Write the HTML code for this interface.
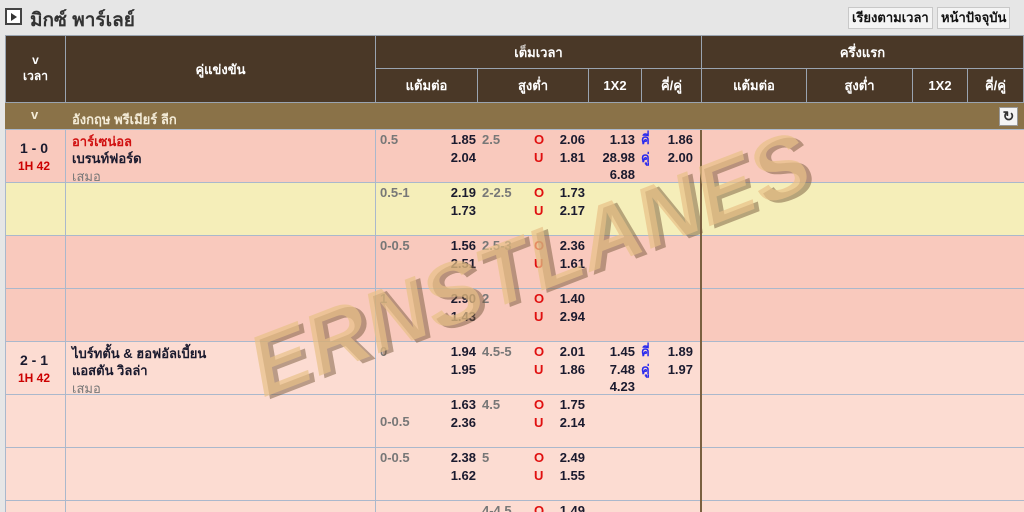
<!DOCTYPE html>
<html><head><meta charset="utf-8"><style>
*{margin:0;padding:0;box-sizing:border-box}
html,body{width:1024px;height:512px;overflow:hidden}
body{background:#e6e6e6;font-family:"Liberation Sans","Noto Sans CJK SC",sans-serif;position:relative;font-size:13px}
.a{position:absolute;white-space:nowrap}
.h{background:#4a3827;color:#fff;border:1px solid #9aa4b0;display:flex;align-items:center;justify-content:center;font-size:13px;font-weight:bold}
.row{position:absolute;left:5px;width:1019px;height:53px;border-bottom:1px solid #aab8cc}
.b{font-weight:bold;color:#1a1a2e}
.g{color:#777;font-weight:bold}
.r{color:#e01010;font-weight:bold}
.bl{color:#2a2aee;font-weight:bold}
.btn{position:absolute;top:7px;height:22px;background:#f4f4f4;border:1px solid #c8c8c8;font-size:13px;line-height:20px;padding:0 3px;color:#111;font-weight:bold;white-space:nowrap}
</style></head><body>
<div class="a" style="left:5px;top:8px;width:17px;height:17px;border:2px solid #444;background:#fff"><div style="position:absolute;left:4px;top:3px;border-left:6px solid #333;border-top:4px solid transparent;border-bottom:4px solid transparent"></div></div>
<div class="a" style="left:30px;top:5px;font-size:19px;font-weight:bold;color:#333">มิกซ์ พาร์เลย์</div>
<div class="btn" style="left:848px">เรียงตามเวลา</div>
<div class="btn" style="left:937px">หน้าปัจจุบัน</div>

<div class="a h" style="left:5px;top:35px;width:61px;height:68px;flex-direction:column;font-size:12px"><div>v</div><div>เวลา</div></div>
<div class="a h" style="left:65px;top:35px;width:311px;height:68px">คู่แข่งขัน</div>
<div class="a h" style="left:375px;top:35px;width:327px;height:34px">เต็มเวลา</div>
<div class="a h" style="left:701px;top:35px;width:323px;height:34px">ครึ่งแรก</div>
<div class="a h" style="left:375px;top:68px;width:103px;height:35px">แต้มต่อ</div>
<div class="a h" style="left:477px;top:68px;width:112px;height:35px">สูงต่ำ</div>
<div class="a h" style="left:588px;top:68px;width:54px;height:35px">1X2</div>
<div class="a h" style="left:641px;top:68px;width:61px;height:35px">คี่/คู่</div>
<div class="a h" style="left:701px;top:68px;width:106px;height:35px">แต้มต่อ</div>
<div class="a h" style="left:806px;top:68px;width:107px;height:35px">สูงต่ำ</div>
<div class="a h" style="left:912px;top:68px;width:56px;height:35px">1X2</div>
<div class="a h" style="left:967px;top:68px;width:57px;height:35px">คี่/คู่</div>

<div class="a" style="left:5px;top:103px;width:1019px;height:27px;background:#8a7248;color:#f4ecd8;font-weight:bold;border-bottom:1px solid #aab8cc">
<span class="a" style="left:26px;top:4px">v</span><span class="a" style="left:67px;top:6px">อังกฤษ พรีเมียร์ ลีก</span>
<span class="a" style="left:994px;top:4px;width:19px;height:19px;background:#f4f4f4;border:1px solid #999;color:#333;text-align:center;line-height:17px;font-size:14px">↻</span></div>

<div class="row" style="top:130px;background:#f9c9bd"></div>
<div class="row" style="top:183px;background:#f5eeb9"></div>
<div class="row" style="top:236px;background:#f9c9bd"></div>
<div class="row" style="top:289px;background:#f9c9bd"></div>
<div class="row" style="top:342px;background:#fcdcd2"></div>
<div class="row" style="top:395px;background:#fcdcd2"></div>
<div class="row" style="top:448px;background:#fcdcd2"></div>
<div class="row" style="top:501px;height:11px;border:0;background:#fcdcd2"></div>
<div class="a" style="left:5px;top:130px;width:1px;height:382px;background:#aab8cc"></div>
<div class="a" style="left:65px;top:130px;width:1px;height:382px;background:#aab8cc"></div>
<div class="a" style="left:375px;top:130px;width:1px;height:382px;background:#aab8cc"></div>
<div class="a" style="left:700px;top:130px;width:2px;height:382px;background:#7a6040"></div>

<div class="a b" style="left:20px;top:140px;font-size:14px">1 - 0</div>
<div class="a r" style="left:18px;top:159px;font-size:12px;color:#c00">1H 42</div>
<div class="a r" style="left:72px;top:131px;color:#d01010">อาร์เซน่อล</div>
<div class="a b" style="left:72px;top:148px">เบรนท์ฟอร์ด</div>
<div class="a" style="left:72px;top:166px;color:#777">เสมอ</div>
<div class="a b" style="left:20px;top:352px;font-size:14px">2 - 1</div>
<div class="a" style="left:18px;top:371px;font-size:12px;color:#c00;font-weight:bold">1H 42</div>
<div class="a b" style="left:72px;top:343px">ไบร์ทตั้น &amp; ฮอฟอัลเบี้ยน</div>
<div class="a b" style="left:72px;top:360px">แอสตัน วิลล่า</div>
<div class="a" style="left:72px;top:378px;color:#777">เสมอ</div>

<div class="a" style="left:380px;top:131px;line-height:17.5px">
<div class="a g" style="top:0">0.5</div>
<div class="a g" style="top:53px">0.5-1</div>
<div class="a g" style="top:106px">0-0.5</div>
<div class="a g" style="top:159px">1</div>
<div class="a g" style="top:212px">0</div>
<div class="a g" style="top:282px">0-0.5</div>
<div class="a g" style="top:318px">0-0.5</div>
</div>
<div class="a b" style="left:441px;top:131px;line-height:17.5px;width:35px;text-align:right">
<div>1.85<br>2.04</div><div style="margin-top:18px">2.19<br>1.73</div><div style="margin-top:18px">1.56<br>2.51</div><div style="margin-top:18px">2.90<br>1.43</div><div style="margin-top:18px">1.94<br>1.95</div><div style="margin-top:18px">1.63<br>2.36</div><div style="margin-top:18px">2.38<br>1.62</div>
</div>
<div class="a g" style="left:482px;top:131px;line-height:17.5px">
<div class="a" style="top:0">2.5</div><div class="a" style="top:53px">2-2.5</div><div class="a" style="top:106px">2.5-3</div><div class="a" style="top:159px">2</div><div class="a" style="top:212px">4.5-5</div><div class="a" style="top:265px">4.5</div><div class="a" style="top:318px">5</div><div class="a" style="top:371px">4-4.5</div>
</div>
<div class="a r" style="left:534px;top:131px;line-height:17.5px">
<div>O<br>U</div><div style="margin-top:18px">O<br>U</div><div style="margin-top:18px">O<br>U</div><div style="margin-top:18px">O<br>U</div><div style="margin-top:18px">O<br>U</div><div style="margin-top:18px">O<br>U</div><div style="margin-top:18px">O<br>U</div><div style="margin-top:18px">O</div>
</div>
<div class="a b" style="left:551px;top:131px;line-height:17.5px;width:34px;text-align:right">
<div>2.06<br>1.81</div><div style="margin-top:18px">1.73<br>2.17</div><div style="margin-top:18px">2.36<br>1.61</div><div style="margin-top:18px">1.40<br>2.94</div><div style="margin-top:18px">2.01<br>1.86</div><div style="margin-top:18px">1.75<br>2.14</div><div style="margin-top:18px">2.49<br>1.55</div><div style="margin-top:18px">1.49</div>
</div>
<div class="a b" style="left:590px;top:131px;line-height:17.5px;width:45px;text-align:right">1.13<br>28.98<br>6.88</div>
<div class="a b" style="left:590px;top:343px;line-height:17.5px;width:45px;text-align:right">1.45<br>7.48<br>4.23</div>
<div class="a bl" style="left:641px;top:131px;line-height:17.5px">คี่<br>คู่</div>
<div class="a bl" style="left:641px;top:343px;line-height:17.5px">คี่<br>คู่</div>
<div class="a b" style="left:658px;top:131px;line-height:17.5px;width:35px;text-align:right">1.86<br>2.00</div>
<div class="a b" style="left:658px;top:343px;line-height:17.5px;width:35px;text-align:right">1.89<br>1.97</div>

<div class="a" style="left:230px;top:215px;width:600px;text-align:center;transform:rotate(-21deg);font-size:86px;font-weight:bold;font-style:italic;color:rgba(232,192,135,0.7);text-shadow:4px 4px 0 rgba(120,90,60,0.5);letter-spacing:1px">ERNSTLANES</div>
</body></html>
